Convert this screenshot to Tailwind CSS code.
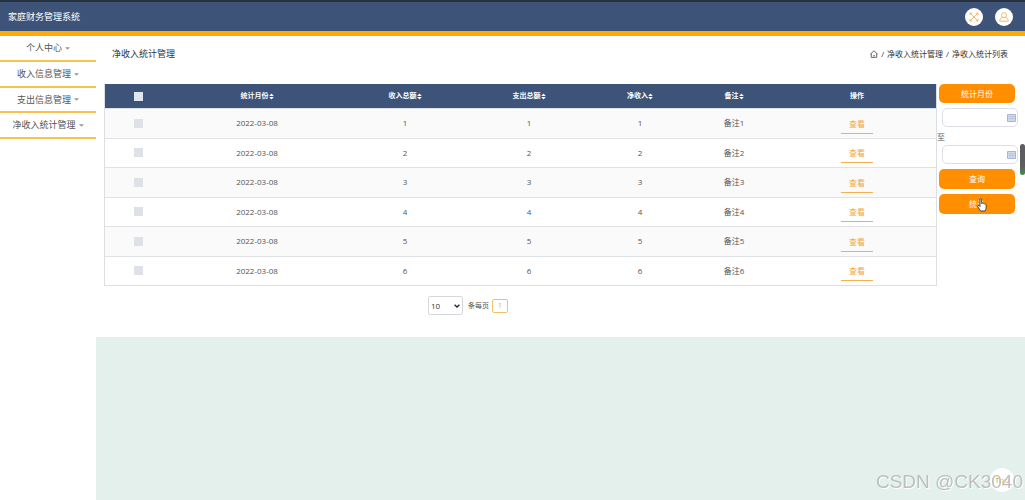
<!DOCTYPE html>
<html lang="zh-CN">
<head>
<meta charset="utf-8">
<title>家庭财务管理系统</title>
<script src="https://cdn.jsdelivr.net/npm/@tailwindcss/browser@4"></script>
</head>
<body class="flex min-h-screen flex-col bg-white font-['Open_Sans','Noto_Sans_CJK_SC',sans-serif] text-[8px] leading-[12px] text-[#555]">
<svg class="hidden">
  <symbol id="sort" viewBox="0 0 6 8"><path d="M3 0.300 5.800 3.500H.2zM3 7.700.2 4.500h5.600z" fill="currentColor"/></symbol>
  <symbol id="cal" viewBox="0 0 9 8"><path d="M.5 .5h8v7h-8z" fill="#d3dcef" stroke="#a9b5d3"/><path d="M1 2.5h7M1 4.5h7M3.3 2v5M5.7 2v5" stroke="#b3bfda" stroke-width=".6"/></symbol>
</svg>

<header class="flex h-9 shrink-0 items-center justify-between border-t-2 border-b-[5px] border-t-[#26303f] border-b-[#ffab09] bg-[#3d5478] pr-3 pl-2">
  <h1 class="text-[9px] text-white">家庭财务管理系统</h1>
  <div class="flex gap-3">
    <button type="button" aria-label="全屏" class="flex size-[18px] items-center justify-center rounded-full bg-white">
      <svg class="size-[10px]" viewBox="0 0 10 10" fill="none" stroke="#f5b76b" stroke-width="1"><path d="M1 3.2V1h2.200M6.800 1H9v2.200M9 6.800V9H6.800M3.200 9H1V6.800M1 1l8 8M9 1 1 9"/></svg>
    </button>
    <button type="button" aria-label="用户" class="flex size-[18px] items-center justify-center rounded-full bg-white">
      <svg class="size-[10px]" viewBox="0 0 10 10" fill="none" stroke="#f5b76b" stroke-width="1"><circle cx="5" cy="3.200" r="2.500"/><path d="M3.400 5.200C1.600 6 .8 7.300.8 9.200h8.400C9.200 7.300 8.400 6 6.600 5.200"/></svg>
    </button>
  </div>
</header>

<div class="flex grow">
  <nav class="w-24 shrink-0 bg-white text-[9px] text-[#555]">
    <a href="#" class="flex h-[26px] items-center justify-center gap-[3px] border-b-2 border-[#f8c34c]">个人中心<svg class="h-[3px] w-[5px]" viewBox="0 0 6 3"><path d="M0 0h6L3 3z" fill="#999"/></svg></a>
    <a href="#" class="flex h-[26px] items-center justify-center gap-[3px] border-b-2 border-[#f8c34c]">收入信息管理<svg class="h-[3px] w-[5px]" viewBox="0 0 6 3"><path d="M0 0h6L3 3z" fill="#999"/></svg></a>
    <a href="#" class="flex h-[25px] items-center justify-center gap-[3px] border-b-2 border-[#f8c34c]">支出信息管理<svg class="h-[3px] w-[5px]" viewBox="0 0 6 3"><path d="M0 0h6L3 3z" fill="#999"/></svg></a>
    <a href="#" class="flex h-[26px] items-center justify-center gap-[3px] border-b-2 border-[#f8c34c]">净收入统计管理<svg class="h-[3px] w-[5px]" viewBox="0 0 6 3"><path d="M0 0h6L3 3z" fill="#999"/></svg></a>
  </nav>

  <main class="flex min-w-0 grow flex-col bg-[#e4f0ec]">
    <section class="bg-white pb-[22px] pl-2">
      <div class="flex h-12 items-start justify-between pt-3 pr-[17px] pl-2 text-[#333]">
        <h2 class="text-[9px]">净收入统计管理</h2>
        <div class="flex items-center gap-[3px]">
          <svg class="size-2" viewBox="0 0 8 8" fill="none" stroke="#444" stroke-width=".8"><path d="M.4 4.200 4 .8l3.600 3.400M1.300 3.500v3.900h5.400V3.500M3 5.800h2"/></svg>
          <span>/</span><a href="#">净收入统计管理</a><span>/</span><span>净收入统计列表</span>
        </div>
      </div>

      <div class="flex">
        <div class="min-w-0 grow">
          <table class="w-full table-fixed border-separate border-spacing-0 border-x border-b border-[#dcdfe2] text-center">
            <colgroup><col class="w-[67px]"><col class="w-[170px]"><col class="w-[126px]"><col class="w-[122px]"><col class="w-[100px]"><col class="w-[88px]"><col></colgroup>
            <thead class="bg-[#3d5478] text-[7px] text-white">
              <tr class="h-6">
                <th><input type="checkbox" aria-label="全选" class="block mx-auto size-[9px] appearance-none bg-[#e0e6ee]"></th>
                <th>统计月份<svg class="inline h-[7px] w-[5px]"><use href="#sort"/></svg></th>
                <th>收入总额<svg class="inline h-[7px] w-[5px]"><use href="#sort"/></svg></th>
                <th>支出总额<svg class="inline h-[7px] w-[5px]"><use href="#sort"/></svg></th>
                <th>净收入<svg class="inline h-[7px] w-[5px]"><use href="#sort"/></svg></th>
                <th>备注<svg class="inline h-[7px] w-[5px]"><use href="#sort"/></svg></th>
                <th>操作</th>
              </tr>
            </thead>
            <tbody id="rows"></tbody>
          </table>
          <div class="flex items-center pt-[10px] pl-[324px]">
            <select aria-label="每页条数" class="h-[19px] w-[35px] appearance-none rounded-xs border border-[#d5d9de] bg-white bg-[url('data:image/svg+xml,%3Csvg%20xmlns=%22http://www.w3.org/2000/svg%22%20viewBox=%220%200%206%204%22%3E%3Cpath%20d=%22M.6%20.7%203%203%205.4%20.7%22%20fill=%22none%22%20stroke=%22%23222%22%20stroke-width=%221.3%22/%3E%3C/svg%3E')] bg-[length:6px_4px] bg-[position:right_2px_center] bg-no-repeat pl-[2px] text-[8px] leading-none text-[#333]"><option>10</option></select>
            <span class="pr-[3px] pl-[5px] text-[7px]">条每页</span>
            <button type="button" class="h-[14px] w-4 rounded-xs border border-[#edc26d] text-[7px] leading-none text-[#e6a23c]">1</button>
          </div>
        </div>

        <form class="flex w-[88px] shrink-0 flex-col pr-[8px] text-white">
          <button type="button" class="ml-[2px] h-[19px] w-[76px] rounded-[5px] bg-[#ff8f00]">统计月份</button>
          <div class="mt-[5px] ml-[5px] flex h-[19px] w-[76px] items-center rounded-[5px] border border-[#dcdfe6] bg-white pr-px">
            <input aria-label="开始月份" class="min-w-0 grow px-1 text-[#555] outline-none"><svg class="h-2 w-[9px] shrink-0"><use href="#cal"/></svg>
          </div>
          <span class="pt-1 pb-[2px] text-[#555]">至</span>
          <div class="ml-[5px] flex h-[19px] w-[76px] items-center rounded-[5px] border border-[#dcdfe6] bg-white pr-px">
            <input aria-label="结束月份" class="min-w-0 grow px-1 text-[#555] outline-none"><svg class="h-2 w-[9px] shrink-0"><use href="#cal"/></svg>
          </div>
          <button type="button" class="mt-[5px] ml-[2px] h-5 w-[76px] rounded-[5px] bg-[#ff8f00]">查询</button>
          <button type="button" class="relative mt-[5px] ml-[2px] h-5 w-[76px] rounded-[5px] bg-[#ff8f00]">统计
            <svg class="absolute top-1 left-[38px] h-[14px] w-[10px]" viewBox="0 0 10 14"><path d="M3 1.500c0-1.200 1.700-1.200 1.700 0v4c.3-.7 1.500-.5 1.600.3.400-.6 1.400-.3 1.500.4.600-.4 1.400 0 1.400.8 0 2.400.1 4-1.200 6H3.600C2.600 11.300 1.500 9.800.7 8.500c-.5-.9.6-1.600 1.300-.9l1 1z" fill="#fff" stroke="#222" stroke-width=".8"/></svg>
          </button>
        </form>
      </div>
    </section>
  </main>
</div>

<div class="fixed top-[144px] right-0 h-[31px] w-[5px] rounded-full bg-linear-to-b from-[#5d5d5f] from-70% to-[#3d8a50]"></div>
<button type="button" class="fixed right-[11px] bottom-2 size-6 rounded-full bg-white text-[8px] text-[#e58c45]">Top</button>
<div class="fixed right-[2px] bottom-[6px] font-['Liberation_Sans',sans-serif] text-[19px] leading-6 text-[#b9c0be] [text-shadow:1px_1px_0_#fff]">CSDN @CK3040</div>

<script>
  document.getElementById('rows').innerHTML = [1, 2, 3, 4, 5, 6].map(n => `
    <tr class="h-[29px] odd:h-[30px] odd:bg-[#fafafa] *:border-t *:border-[#dfe2e4] *:px-0 *:pt-0 *:pb-px">
      <td><input type="checkbox" aria-label="选择第${n}行" class="block mx-auto size-[9px] appearance-none bg-[#dee2e6]"></td>
      <td>2022-03-08</td><td>${n}</td><td>${n}</td><td>${n}</td><td>备注${n}</td>
      <td><button type="button" class="mt-[2px] h-[19px] w-8 border-b border-[#f3b04f] text-[#f3a53c]">查看</button></td>
    </tr>`).join('');
</script>
</body>
</html>
